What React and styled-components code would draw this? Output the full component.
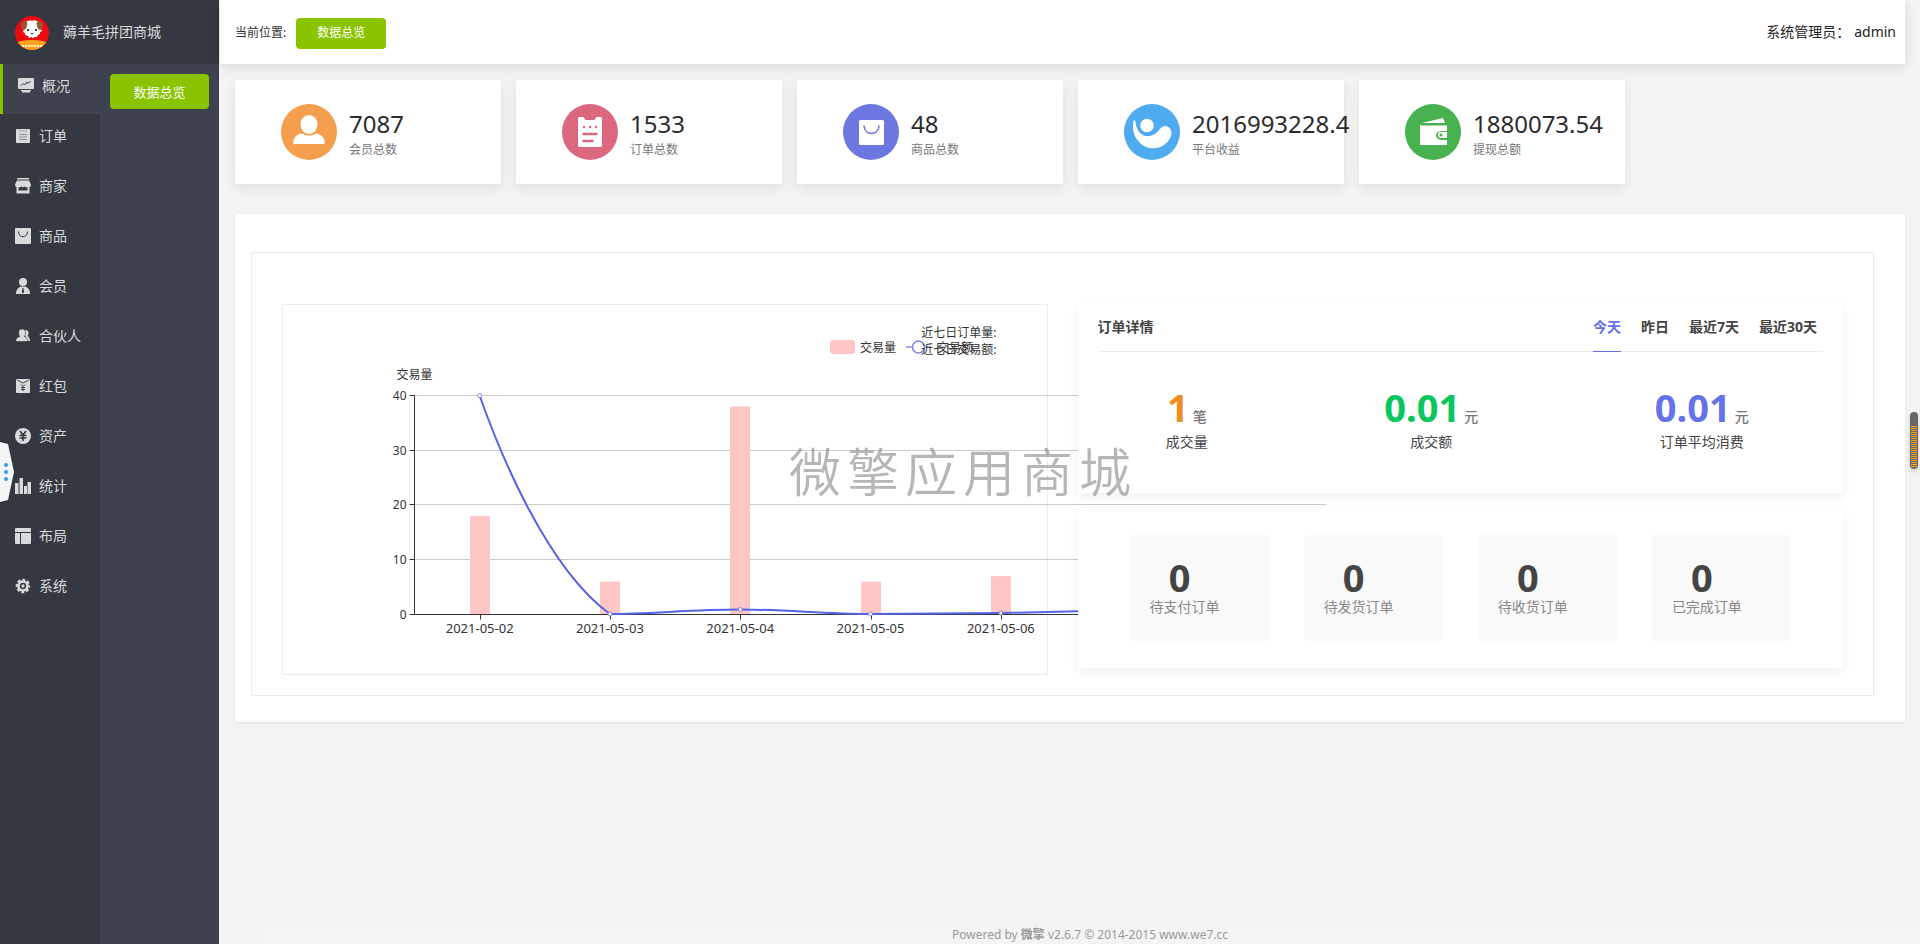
import React, { useState } from "react";
import styled, { createGlobalStyle } from "styled-components";

const GlobalStyle = createGlobalStyle`
  *, *::before, *::after { box-sizing: border-box; }
  body {
    margin: 0;
    background: #f3f3f3;
    color: #333;
    font: 14px/20px "Noto Sans", "Noto Sans CJK SC", sans-serif;
  }
  button { font: inherit; border: 0; padding: 0; background: none; cursor: pointer; }
  a { color: inherit; text-decoration: none; }
  h1, h2, p, ul, dl, dd { margin: 0; padding: 0; }
  ul { list-style: none; }
`;

const Page = styled.div`
  display: flex;
  min-height: 100vh;
`;

/* ---------- sidebar ---------- */

const Sidebar = styled.aside`
  display: flex;
  flex-direction: column;
  flex: 0 0 219px;
  background: #3d424e;
`;

const Brand = styled.div`
  display: flex;
  align-items: center;
  gap: 14px;
  height: 64px;
  padding: 2px 15px 0;
  background: #343840;
`;

const BrandName = styled.h1`
  padding-bottom: 2px;
  font-size: 14px;
  line-height: 20px;
  font-weight: 400;
  color: #d8dadc;
`;

const MenuColumns = styled.div`
  display: flex;
  flex: 1;
`;

const Menu = styled.ul`
  flex: 0 0 100px;
  background: #343840;
`;

const MenuLink = styled.a`
  display: flex;
  align-items: center;
  gap: 8px;
  height: 50px;
  padding: 0 0 6px 15px;
  color: #d8dadc;
  background: ${(p) => (p.$active ? "#3d424e" : "transparent")};
  border-left: ${(p) => (p.$active ? "3px solid #8ac400" : "0")};
`;

const MenuIcon = styled.svg`
  flex: none;
  width: 16px;
  height: 16px;
  fill: #d8dadc;
`;

const SubMenu = styled.div`
  flex: 1;
  padding: 10px;
`;

const GreenButton = styled.button`
  width: ${(p) => (p.$block ? "100%" : "90px")};
  height: ${(p) => (p.$block ? "35px" : "31px")};
  border-radius: 4px;
  background: #8ac400;
  color: #fff;
  font-size: ${(p) => (p.$block ? "13px" : "12px")};
`;

/* ---------- header and main ---------- */

const Main = styled.main`
  display: flex;
  flex-direction: column;
  flex: 1;
  min-width: 0;
  padding-left: 1px;
`;

const TopBar = styled.header`
  display: flex;
  align-items: center;
  justify-content: space-between;
  height: 64px;
  margin-right: 15px;
  padding: 2px 9px 0 15px;
  background: #fff;
  box-shadow: 0 2px 12px rgba(0, 0, 0, 0.12);
`;

const Crumb = styled.div`
  display: flex;
  align-items: center;
  gap: 10px;
  font-size: 12px;
`;

const Admin = styled.div`
  display: flex;
  gap: 4px;
  padding-bottom: 2px;
  color: #222;
`;

const Content = styled.div`
  display: flex;
  flex-direction: column;
  gap: 30px;
  padding: 16px 15px 30px;
`;

const Totals = styled.div`
  display: flex;
  gap: 15px;
`;

const TotalCard = styled.section`
  display: flex;
  align-items: center;
  gap: 12px;
  width: 266px;
  height: 104px;
  padding-left: 46px;
  background: #fff;
  box-shadow: 0 4px 12px rgba(0, 0, 0, 0.08);
`;

const TotalIcon = styled.svg`
  flex: none;
  width: 56px;
  height: 56px;
`;

const TotalText = styled.div`
  padding-top: 4px;
`;

const TotalNumber = styled.p`
  font-size: 24px;
  line-height: 32px;
  color: #2c2c2c;
`;

const TotalLabel = styled.p`
  font-size: 12px;
  color: #777;
`;

const Panel = styled.section`
  padding: 38px 31px 26px 16px;
  background: #fff;
  box-shadow: 0 1px 2px rgba(0, 0, 0, 0.08);
`;

const PanelFrame = styled.div`
  display: grid;
  grid-template-columns: minmax(0, 1fr) minmax(0, 1fr);
  gap: 30px;
  padding: 51px 30px 20px;
  border: 1px solid #ececec;
`;

const ChartBox = styled.div`
  position: relative;
  height: 371px;
  border: 1px solid #ececec;
`;

const ChartSvg = styled.svg`
  display: block;
  width: 1060px;
  height: 369px;
  fill: #333;
`;

const AxisText = styled.text`
  font-size: 12px;
  text-anchor: ${(p) => p.$anchor || "start"};
`;

const DateText = styled(AxisText)`
  font-size: 13px;
`;

const ChartSummary = styled.div`
  position: absolute;
  top: 19px;
  right: 50px;
  font-size: 12px;
  line-height: 17px;
`;

const Orders = styled.div`
  position: relative;
  display: flex;
  flex-direction: column;
  gap: 15px;
`;

const OrderCard = styled.section`
  background: #fff;
  box-shadow: 0 4px 10px rgba(0, 0, 0, 0.06);
`;

const OrderHead = styled.div`
  display: flex;
  justify-content: space-between;
  margin: 0 20px;
  padding-right: 6px;
  border-bottom: 1px solid #ececec;
  font-weight: 700;
  color: #444;
`;

const OrderTitle = styled.h2`
  padding-bottom: 1px;
  font-size: 14px;
  line-height: 46px;
`;

const Tabs = styled.div`
  display: flex;
  gap: 20px;
`;

const Tab = styled.button`
  margin-bottom: -1px;
  padding-bottom: 1px;
  color: ${(p) => (p.$active ? "#6571e5" : "#444")};
  border-bottom: 1px solid ${(p) => (p.$active ? "#6571e5" : "transparent")};
  font-weight: 700;
`;

const Figures = styled.div`
  display: flex;
  justify-content: space-around;
  padding: 30px 6px 41px 0;
  text-align: center;
  color: #444;
`;

const BigNumber = styled.b`
  margin-right: ${(p) => (p.$tight ? "10px" : "4px")};
  font-size: 38px;
  line-height: ${(p) => (p.$tight ? "36px" : "50px")};
  color: ${(p) => p.$color || "#444"};
`;

const Unit = styled.span`
  font-weight: 500;
  color: #777;
`;

const Tiles = styled.div`
  display: grid;
  grid-template-columns: repeat(4, 1fr);
  gap: 35px;
  padding: 27px 52px;
`;

const Tile = styled.div`
  display: flex;
  height: 106px;
  padding: 24px 20px;
  border-radius: 4px;
  background: #f9f9f9;
  color: #888;
  text-align: center;
  white-space: nowrap;
`;

const Footer = styled.footer`
  margin: auto 0 0 40px;
  background: #f4f4f4;
  text-align: center;
  font-size: 12px;
  line-height: 18px;
  color: #999;
`;

/* ---------- floating pieces ---------- */

const Watermark = styled.div`
  position: fixed;
  left: 0;
  right: 0;
  top: 50%;
  margin-top: -38px;
  padding-left: 6px;
  text-align: center;
  font-family: "Noto Sans CJK SC", sans-serif;
  font-size: 52px;
  line-height: 72px;
  font-weight: 350;
  letter-spacing: 6px;
  color: rgba(130, 130, 130, 0.58);
  pointer-events: none;
`;

const Handle = styled.button`
  position: fixed;
  left: 0;
  top: 50%;
  height: 60px;
  margin-top: -30px;
  svg { display: block; width: 14px; height: 60px; }
`;

const ScrollMark = styled.div`
  position: fixed;
  right: 2px;
  top: 412px;
  width: 8px;
  height: 57px;
  padding: 14px 1px 2px;
  border-radius: 4px;
  background: #666;
  box-shadow: 0 2px 4px rgba(0, 0, 0, 0.15);
  &::before {
    content: "";
    display: block;
    height: 100%;
    background: repeating-linear-gradient(#ffa21a 0 1px, #666 1px 2px);
  }
`;

/* ---------- data ---------- */

const INK = "#343840";

const menu = [
  ["概况", <><path d="M1 0h14a1 1 0 0 1 1 1v9a1 1 0 0 1-1 1H1a1 1 0 0 1-1-1V1a1 1 0 0 1 1-1zM3 12h10v1H3zM4 13h8v1.500H4z" /><path d="M3 7.500l2-2L6.500 7 9 4l1 1.500L12.500 3" fill="none" stroke={INK} /></>],
  ["订单", <><path d="M2 1h12a1 1 0 0 1 1 1v12a1 1 0 0 1-1 1H2a1 1 0 0 1-1-1V2a1 1 0 0 1 1-1z" /><path d="M4.500 1v2h7V1" fill="none" stroke="#a5a8ad" /><path d="M4 6.500h8M4 9h8M4 11.500h8" stroke="#8b8f95" /></>],
  ["商家", <><path d="M2 0h12v1.500H2zM2 2.500h12l2 4c0 1.500-.5 2.500-1.500 2.500v6.500h-13V9C.5 9 0 8 0 6.500z" /><path d="M3.500 9q1.500.8 3-.5q1.500 1.300 3 0q1.500 1.300 3 .5v3.500h-9z" fill={INK} /></>],
  ["商品", <><rect width="16" height="16" rx="1" /><path d="M3.500 3.500c0 7 9 7 9 0" fill="none" stroke={INK} /></>],
  ["会员", <><circle cx="8" cy="4" r="4" /><path d="M1 16c0-4.500 2-6.500 5-7.500h4c3 1 5 3 5 7.500z" /><path d="M7.500 10h1l.6 4-1.100 1.500L6.900 14z" fill={INK} /></>],
  ["合伙人", <><path d="M10 2c4.500-.5 4 4 2.500 6 2 1 2.500 3 2.500 5h-3c0-3-1-4-2-5z" /><path d="M7 1c4.500 0 4 5.500 2.500 7.500 2 1 3 2 3 5H.8c0-3 1-4 4-5C3 6 3 1 7 1z" stroke={INK} strokeWidth="0.600" /></>],
  ["红包", <><rect x="1" y="1" width="14" height="14" rx="1" /><path d="M2 2l6 3 6-3M6 6.500l2 2 2-2M8 8.500V13M6 9.500h4M6 11.500h4" fill="none" stroke={INK} strokeWidth="0.900" /></>],
  ["资产", <><circle cx="8" cy="8" r="8" /><path d="M5 3l3 4 3-4M8 7v6M4.500 7.500h7M4.500 10h7" fill="none" stroke={INK} strokeWidth="1.600" /></>],
  ["统计", <path d="M0 5h3.500v11H0zM4.500 0h3.500v16H4.500zM9 8h3v8H9zM12.500 4H16v12h-3.500z" />],
  ["布局", <path d="M1 0h14a1 1 0 0 1 1 1v3H0V1a1 1 0 0 1 1-1zM0 5h5v11H1a1 1 0 0 1-1-1zM6 5H16v10a1 1 0 0 1-1 1H6z" />],
  ["系统", <><circle cx="8" cy="8" r="5.800" /><circle cx="8" cy="8" r="6" fill="none" stroke="#d8dadc" strokeWidth="2.600" strokeDasharray="2.800 1.912" strokeDashoffset="1.400" /><circle cx="8" cy="8" r="2.400" fill="none" stroke={INK} strokeWidth="1.500" /></>],
];

const totals = [
  { value: "7087", label: "会员总数", color: "#f59e4e", art: <><ellipse cx="28" cy="20.500" rx="8.500" ry="9.500" /><path d="M12.500 40v-3c0-4 5-7.500 9-7.500 4 3 9 3 13 0 4 0 9 3.500 9 7.500v3z" /></> },
  { value: "1533", label: "订单总数", color: "#db687e", art: <><path d="M18 13h3c2 0 1 3 3 3h8c2 0 1-3 3-3h3c1.500 0 2 .5 2 2v26c0 1.500-.5 2-2 2H18c-1.500 0-2-.5-2-2V15c0-1.500.5-2 2-2z" /><g stroke="#db687e" strokeWidth="2.400" strokeLinecap="round"><path d="M22 23h.1M28 23h.1M34 23h.1M21.500 30h13M21.500 37h9" /></g></> },
  { value: "48", label: "商品总数", color: "#6c78e0", art: <><rect x="16" y="16" width="25" height="25" rx="1.500" /><path d="M21 22c1 10 14 10 15 0" fill="none" stroke="#6c78e0" strokeWidth="1.600" strokeLinecap="round" /></> },
  { value: "2016993228.4", label: "平台收益", color: "#4fabef", art: <><circle cx="23" cy="21.500" r="6.800" /><path d="M9.500 17c-1 5-1 13 4 19 6 8 13 9 19 8 8-1 15-9 15-15 0-4-3-7-7-7-5 0-6 9-15 10-7 1-13-4-14-14 0-2-1-2-2-1z" /></> },
  { value: "1880073.54", label: "提现总额", color: "#48b250", art: <><path d="M17 19l21-5 2 5zM15 21h27v6h-5c-8 0-8 9 0 9h5v5H15z" /><path d="M16 21h26" stroke="#48b250" strokeWidth="1" /><path d="M36 28h6v6h-6a3 3 0 0 1 0-6z" /><circle cx="36" cy="31" r="1.500" fill="#48b250" /></> },
];

const figures = [
  ["1", "笔", "成交量", "#ee8f22"],
  ["0.01", "元", "成交额", "#07c75c"],
  ["0.01", "元", "订单平均消费", "#6672e8"],
];

const tiles = ["待支付订单", "待发货订单", "待收货订单", "已完成订单"];

const volumes = [
  ["2021-05-02", 18],
  ["2021-05-03", 6],
  ["2021-05-04", 38],
  ["2021-05-05", 6],
  ["2021-05-06", 7],
];

/* ---------- parts ---------- */

function BrandLogo() {
  return (
    <svg width="34" height="34" viewBox="0 0 34 34" aria-hidden="true">
      <clipPath id="logo"><circle cx="17" cy="17" r="17" /></clipPath>
      <g clipPath="url(#logo)">
        <path fill="#ea0a10" d="M0 0h34v34H0z" />
        <path fill="#ffa31c" d="M0 27c8-4 26-4 34 0v7H0z" />
        <path d="M7 30h20" stroke="#fff0cf" strokeWidth="2" strokeDasharray="2 1" />
      </g>
      <path d="M9 8l2-2 1-1 2 0 1-1 2 1 2-1 2 1 2 0 1 2 2 1v4l1 3-2 1v2l-2 1-1 2-2 0-2 1-2-1-2 1-1-2-3-1v-2l-2-1 1-3z" fill="#fff" />
      <path d="M6 9c0-4 5-5 6-3 1 3-1 8-3 8-2 0-3-2-3-5zM28 9c0-4-5-5-6-3-1 3 1 8 3 8 2 0 3-2 3-5z" fill="#9a5534" />
      <path d="M15.500 17l1.500 1 1.500-1" stroke="#333" fill="none" />
      <circle cx="13" cy="14" r="1" /><circle cx="21" cy="14" r="1" />
    </svg>
  );
}

const left = 131.5;
const base = 309.5;
const step = 130.3;
const unit = 5.476;
const centre = (i) => left + step * (i + 0.5);
const gridY = (v) => Math.floor(base - v * unit) + 0.5;

function TradeChart() {
  return (
    <ChartSvg viewBox="0 0 1060 369" role="img" aria-label="交易量">
      {[40, 30, 20, 10].map((v) => (
        <path key={v} d={`M${left} ${gridY(v)}h912`} stroke="#ccc" />
      ))}
      {volumes.map(([date, v], i) => (
        <rect key={date} x={Math.round(centre(i)) - 10} y={base - v * unit} width="20" height={v * unit} fill="#ffc6c6" />
      ))}
      <path d={`M${left} 90v220M${left} ${base}h912`} stroke="#333" />
      {[0, 10, 20, 30, 40].map((v) => (
        <g key={v}>
          <path d={`M${left - 5} ${gridY(v)}h5`} stroke="#333" />
          <AxisText $anchor="end" x={left - 8} y={gridY(v) + 4.5}>{v}</AxisText>
        </g>
      ))}
      {volumes.map(([date], i) => (
        <g key={date}>
          <path d={`M${Math.round(centre(i)) + 0.5} ${base}v5`} stroke="#333" />
          <DateText $anchor="middle" x={centre(i)} y="328">{date}</DateText>
        </g>
      ))}
      <AxisText $anchor="middle" x={left} y="74">交易量</AxisText>
      <path
        d="M196.600 90.500C214 140 262 262 326.900 309C366 309 410 304.500 457.200 304.500S540 309 587.500 309S680 308.500 717.800 308S800 306.500 848 305"
        fill="none" stroke="#5663e4" strokeWidth="2"
      />
      {[90.5, 309, 304.5, 309, 308].map((y, i) => (
        <circle key={i} cx={centre(i)} cy={y} r="2" fill="#fff" stroke="#7b86ea" />
      ))}
      <rect x="547" y="35" width="25" height="14" rx="3" fill="#ffc6c6" />
      <AxisText x="577" y="47">交易量</AxisText>
      <path d="M623 42h25" stroke="#a3abf0" strokeWidth="2" />
      <circle cx="635.500" cy="42" r="6" fill="#fff" stroke="#7b86ea" strokeWidth="1.500" />
      <AxisText x="654" y="47">交易额</AxisText>
    </ChartSvg>
  );
}

export default function App() {
  const [tab, setTab] = useState("今天");
  return (
    <>
      <GlobalStyle />
      <Page>
        <Sidebar>
          <Brand>
            <BrandLogo />
            <BrandName>薅羊毛拼团商城</BrandName>
          </Brand>
          <MenuColumns>
            <Menu>
              {menu.map(([name, art], i) => (
                <li key={name}>
                  <MenuLink href="#" $active={i === 0}>
                    <MenuIcon viewBox="0 0 16 16" aria-hidden="true">{art}</MenuIcon>
                    {name}
                  </MenuLink>
                </li>
              ))}
            </Menu>
            <SubMenu>
              <GreenButton $block>数据总览</GreenButton>
            </SubMenu>
          </MenuColumns>
        </Sidebar>

        <Main>
          <TopBar>
            <Crumb>
              <span>当前位置:</span>
              <GreenButton>数据总览</GreenButton>
            </Crumb>
            <Admin><span>系统管理员：</span><span>admin</span></Admin>
          </TopBar>

          <Content>
            <Totals>
              {totals.map((t) => (
                <TotalCard key={t.label}>
                  <TotalIcon viewBox="0 0 56 56" aria-hidden="true">
                    <circle cx="28" cy="28" r="28" fill={t.color} />
                    <g fill="#fff">{t.art}</g>
                  </TotalIcon>
                  <TotalText>
                    <TotalNumber>{t.value}</TotalNumber>
                    <TotalLabel>{t.label}</TotalLabel>
                  </TotalText>
                </TotalCard>
              ))}
            </Totals>

            <Panel>
              <PanelFrame>
                <ChartBox>
                  <TradeChart />
                  <ChartSummary>
                    <p>近七日订单量:</p>
                    <p>近七日交易额:</p>
                  </ChartSummary>
                </ChartBox>

                <Orders>
                  <OrderCard>
                    <OrderHead>
                      <OrderTitle>订单详情</OrderTitle>
                      <Tabs>
                        {["今天", "昨日", "最近7天", "最近30天"].map((name) => (
                          <Tab key={name} $active={tab === name} onClick={() => setTab(name)}>{name}</Tab>
                        ))}
                      </Tabs>
                    </OrderHead>
                    <Figures>
                      {figures.map(([value, unitName, label, color]) => (
                        <div key={label}>
                          <p><BigNumber $color={color}>{value}</BigNumber><Unit>{unitName}</Unit></p>
                          <p>{label}</p>
                        </div>
                      ))}
                    </Figures>
                  </OrderCard>
                  <OrderCard>
                    <Tiles>
                      {tiles.map((label) => (
                        <Tile key={label}>
                          <div>
                            <p><BigNumber $tight>0</BigNumber></p>
                            <p>{label}</p>
                          </div>
                        </Tile>
                      ))}
                    </Tiles>
                  </OrderCard>
                </Orders>
              </PanelFrame>
            </Panel>
          </Content>

          <Footer>
            Powered by <a href="#"><b>微擎</b></a> v2.6.7 © 2014-2015 www.we7.cc
          </Footer>
        </Main>
      </Page>

      <Watermark>微擎应用商城</Watermark>
      <Handle aria-label="展开">
        <svg viewBox="0 0 14 60" aria-hidden="true">
          <path d="M0 0l8 2 6 28-6 28-8 2z" fill="#f3f5f7" />
          <g fill="#3399ff"><circle cx="6" cy="23" r="2" /><circle cx="6" cy="30" r="2" /><circle cx="6" cy="37" r="2" /></g>
        </svg>
      </Handle>
      <ScrollMark />
    </>
  );
}
